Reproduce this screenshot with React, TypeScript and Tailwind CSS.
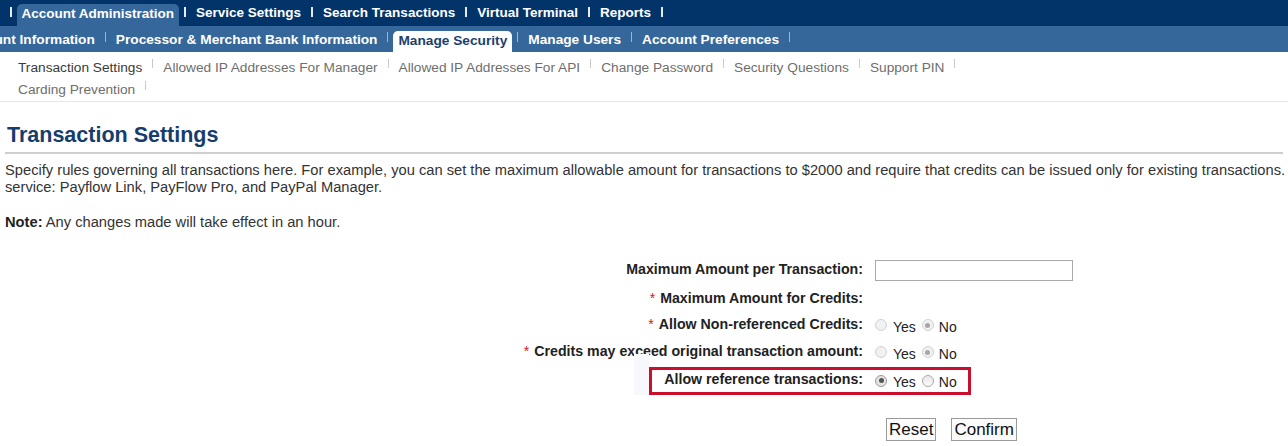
import React, { Fragment } from 'react';

const topItems = ['Home', 'Account Administration', 'Service Settings', 'Search Transactions', 'Virtual Terminal', 'Reports'];
const midItems = ['Account Information', 'Processor & Merchant Bank Information', 'Manage Security', 'Manage Users', 'Account Preferences'];
const subItems = ['Transaction Settings', 'Allowed IP Addresses For Manager', 'Allowed IP Addresses For API', 'Change Password', 'Security Questions', 'Support PIN', 'Carding Prevention'];

function Radio({ checked, strong }: { checked?: boolean; strong?: boolean }) {
  const ring = strong
    ? checked
      ? 'border-[#9a9a9a] bg-[#e4e4e4]'
      : 'border-[#a8a8a8] bg-gradient-to-b from-[#e8e8e8] to-[#fafafa]'
    : 'border-[#d2d2d2] bg-[#f1f1f1]';
  const dot = strong ? 'bg-[#555]' : 'bg-[#a6a6a6]';
  return (
    <span className={`flex h-[12px] w-[12px] shrink-0 items-center justify-center rounded-full border ${ring}`}>
      {checked && <span className={`h-[5px] w-[5px] rounded-full ${dot}`} />}
    </span>
  );
}

function YesNo({ yes, strong }: { yes: boolean; strong?: boolean }) {
  return (
    <div className="flex items-center text-[14px] font-normal text-[#222]">
      <Radio checked={yes} strong={strong} />
      <span className="ml-[6px] translate-y-[2px]">Yes</span>
      <span className="ml-[6px]">
        <Radio checked={!yes} strong={strong} />
      </span>
      <span className="ml-[5px] translate-y-[2px]">No</span>
    </div>
  );
}

function Req() {
  return <span className="mr-[5px] font-normal text-[#d0161e]">*</span>;
}

export default function App() {
  return (
    <div className="h-[446px] w-[1288px] overflow-hidden bg-white font-['Liberation_Sans',Arial,sans-serif] text-[#333]">
      {/* Top nav */}
      <div className="flex h-[26px] bg-[#02346a] text-[13.5px] font-bold text-white">
        <div className="-ml-[43px] flex h-full items-center pt-[1px]">
          {topItems.map((t) => {
            const active = t === 'Account Administration';
            return (
              <Fragment key={t}>
                <div
                  className={
                    active
                      ? 'flex h-[22px] items-center self-end whitespace-nowrap rounded-t-[5px] bg-[#36679b] px-[5px] pb-[2px]'
                      : 'whitespace-nowrap px-[5px]'
                  }
                >
                  {t}
                </div>
                <span className="mx-[5px] h-[10px] w-[2px] -translate-y-[2px] bg-[#e6ebf2]" />
              </Fragment>
            );
          })}
        </div>
      </div>

      {/* Second nav */}
      <div className="flex h-[26px] bg-[#36679b] text-[13.7px] font-bold text-white">
        <div className="-ml-[44px] flex h-full items-center pt-[3px]">
          {midItems.map((t) => {
            const active = t === 'Manage Security';
            return (
              <Fragment key={t}>
                <div
                  className={
                    active
                      ? 'flex h-[21px] items-center self-end whitespace-nowrap rounded-t-[5px] bg-white px-[5px] text-[#1d3f6c]'
                      : 'whitespace-nowrap px-[5px]'
                  }
                >
                  {t}
                </div>
                <span className="mx-[5px] h-[10px] w-[1px] -translate-y-[4px] bg-[#9fb4cd]" />
              </Fragment>
            );
          })}
        </div>
      </div>

      {/* Sub nav */}
      <div className="border-b border-[#e6e6e6] pt-[5px]">
        <div className="flex w-[1000px] flex-wrap pl-[18px] text-[13.7px] leading-[22px]">
          {subItems.map((t, i) => (
            <div key={t} className="flex items-center whitespace-nowrap">
              <span className={i === 0 ? 'text-[#3a3a3a]' : 'text-[#6e6e6e]'}>{t}</span>
              <span className="mx-[10px] h-[9px] w-[1px] -translate-y-[5px] bg-[#c8c8c8]" />
            </div>
          ))}
        </div>
      </div>

      {/* Heading */}
      <div className="mx-[5px] mt-[20px] border-b-2 border-[#cfcfcf] pb-[4px]">
        <h1 className="pl-[2px] text-[21.5px] font-bold leading-[26px] text-[#163d6c]">Transaction Settings</h1>
      </div>

      <p className="mt-[8px] whitespace-nowrap pl-[5px] text-[14.7px] leading-[17px] text-[#333]">
        Specify rules governing all transactions here. For example, you can set the maximum allowable amount for transactions to $2000 and require that credits can be issued only for existing transactions. These settings apply to all transactions in the
        <br />
        service: Payflow Link, PayFlow Pro, and PayPal Manager.
      </p>

      <p className="mt-[18px] whitespace-nowrap pl-[5px] text-[14.7px] leading-[17px] text-[#333]">
        <span className="font-bold text-[#222]">Note:</span> Any changes made will take effect in an hour.
      </p>

      {/* Form */}
      <div className="mt-[24px] text-[14.2px] font-bold text-[#222]">
        <div className="flex h-[30px] items-center">
          <div className="w-[863px] shrink-0 text-right">Maximum Amount per Transaction:</div>
          <input
            type="text"
            className="ml-[12px] h-[21px] w-[198px] border border-[#a9a9a9] bg-white px-1 text-[14px] font-normal outline-none"
          />
        </div>
        <div className="flex h-[27px] items-center">
          <div className="w-[863px] shrink-0 text-right">
            <Req />
            Maximum Amount for Credits:
          </div>
        </div>
        <div className="flex h-[26px] items-center">
          <div className="w-[863px] shrink-0 text-right">
            <Req />
            Allow Non-referenced Credits:
          </div>
          <div className="ml-[12px]">
            <YesNo yes={false} />
          </div>
        </div>
        <div className="flex h-[28px] items-center">
          <div className="w-[863px] shrink-0 text-right">
            <Req />
            Credits may exceed original transaction amount:
          </div>
          <div className="ml-[12px]">
            <YesNo yes={false} />
          </div>
        </div>
        <div className="flex">
          <div className="ml-[634px] mt-[-12px] w-[15px] bg-[#f6f8fc]" />
          <div className="mt-[1px] flex h-[28px] w-[322px] items-center border-[3px] border-[#c8102e] pb-[3px]">
            <div className="w-[211px] shrink-0 text-right">Allow reference transactions:</div>
            <div className="ml-[12px] translate-y-[1px]">
              <YesNo yes={true} strong />
            </div>
          </div>
        </div>
        <div className="mt-[23px] flex pl-[886px] font-normal">
          <button className="h-[23px] border border-[#9a9a9a] bg-[#fbfbfb] px-[2px] text-[17px] leading-[20px] text-[#111]">
            Reset
          </button>
          <button className="ml-[15px] h-[23px] border border-[#9a9a9a] bg-[#fbfbfb] px-[2px] text-[17px] leading-[20px] text-[#111]">
            Confirm
          </button>
        </div>
      </div>
    </div>
  );
}
